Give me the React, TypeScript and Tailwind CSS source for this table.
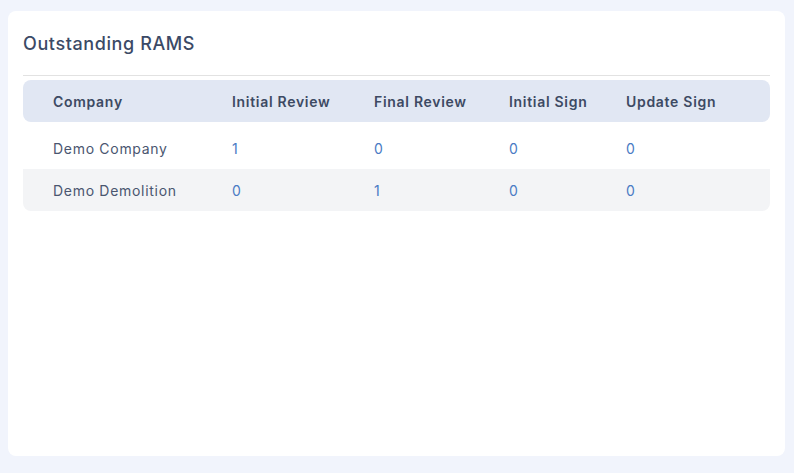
const rows = [
  { company: 'Demo Company', initialReview: 1, finalReview: 0, initialSign: 0, updateSign: 0 },
  { company: 'Demo Demolition', initialReview: 0, finalReview: 1, initialSign: 0, updateSign: 0 },
];

const cols = 'grid grid-cols-[179px_142px_135px_117px_1fr] items-center';

export default function App() {
  return (
    <div className="min-h-[473px] bg-[#f1f4fc] pt-[11px] pl-[8px] pr-[9px] pb-[17px] font-['Inter',sans-serif]">
      <div className="h-[445px] rounded-lg bg-white px-[15px] pt-[22px]">
        <h2 className="text-[18px] font-medium tracking-[0.6px] text-[#3b4a66] leading-[22px]">Outstanding RAMS</h2>

        <div className="mt-[20px] border-t border-[#e2e2e2] pt-[4px]">
          {/* header */}
          <div className={`${cols} h-[42px] rounded-lg bg-[#e1e7f3] text-[14px] font-semibold tracking-[0.7px] text-[#3d4a63]`}>
            <div className="pl-[30px]">Company</div>
            <div className="pl-[30px]">Initial Review</div>
            <div className="pl-[30px]">Final Review</div>
            <div className="pl-[30px]">Initial Sign</div>
            <div className="pl-[30px]">Update Sign</div>
          </div>

          <div className="mt-[5px] text-[14px] tracking-[0.7px]">
            {rows.map((r, i) => (
              <div
                key={r.company}
                className={`${cols} h-[42px] ${i % 2 === 1 ? 'bg-[#f3f4f6] rounded-b-lg' : ''}`}
              >
                <div className="pl-[30px] text-[#4a5670]">{r.company}</div>
                <div className="pl-[30px] text-[#4a7bc4]">{r.initialReview}</div>
                <div className="pl-[30px] text-[#4a7bc4]">{r.finalReview}</div>
                <div className="pl-[30px] text-[#4a7bc4]">{r.initialSign}</div>
                <div className="pl-[30px] text-[#4a7bc4]">{r.updateSign}</div>
              </div>
            ))}
          </div>
        </div>
      </div>
    </div>
  );
}
